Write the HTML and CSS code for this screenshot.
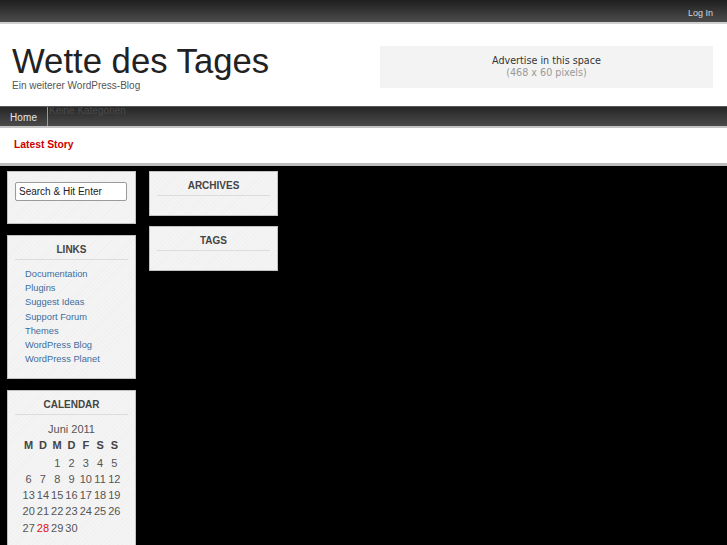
FILE: index.html
```html
<!DOCTYPE html>
<html lang="de">
<head>
<meta charset="utf-8">
<title>Wette des Tages</title>
<link rel="stylesheet" href="styles.css">
</head>
<body>
<div class="topbar"><a class="login" href="#">Log In</a></div>
<header class="header">
  <div class="brand">
    <h1 class="title">Wette des Tages</h1>
    <p class="tagline">Ein weiterer WordPress-Blog</p>
  </div>
  <div class="ad">
    <div class="ad-main">Advertise in this space</div>
    <div class="ad-sub">(468 x 60 pixels)</div>
  </div>
</header>
<nav class="nav">
  <a class="nav-home" href="#">Home</a>
  <span class="nav-cats">Keine Kategorien</span>
</nav>
<div class="latest"><span class="latest-label">Latest Story</span></div>
<main class="content">
  <div class="col">
    <section class="widget widget-search">
      <input class="search" type="text" value="Search &amp; Hit Enter">
    </section>
    <section class="widget widget-links">
      <h2 class="wtitle">Links</h2>
      <ul class="links">
        <li><a href="#">Documentation</a></li>
        <li><a href="#">Plugins</a></li>
        <li><a href="#">Suggest Ideas</a></li>
        <li><a href="#">Support Forum</a></li>
        <li><a href="#">Themes</a></li>
        <li><a href="#">WordPress Blog</a></li>
        <li><a href="#">WordPress Planet</a></li>
      </ul>
    </section>
    <section class="widget widget-cal">
      <h2 class="wtitle">Calendar</h2>
      <table class="cal">
        <caption>Juni 2011</caption>
        <thead>
          <tr><th>M</th><th>D</th><th>M</th><th>D</th><th>F</th><th>S</th><th>S</th></tr>
        </thead>
        <tbody>
          <tr><td></td><td></td><td>1</td><td>2</td><td>3</td><td>4</td><td>5</td></tr>
          <tr><td>6</td><td>7</td><td>8</td><td>9</td><td>10</td><td>11</td><td>12</td></tr>
          <tr><td>13</td><td>14</td><td>15</td><td>16</td><td>17</td><td>18</td><td>19</td></tr>
          <tr><td>20</td><td>21</td><td>22</td><td>23</td><td>24</td><td>25</td><td>26</td></tr>
          <tr><td>27</td><td class="today">28</td><td>29</td><td>30</td><td></td><td></td><td></td></tr>
        </tbody>
      </table>
    </section>
  </div>
  <div class="col">
    <section class="widget widget-empty">
      <h2 class="wtitle">Archives</h2>
    </section>
    <section class="widget widget-empty">
      <h2 class="wtitle">Tags</h2>
    </section>
  </div>
</main>
</body>
</html>
```

FILE: styles.css
```css
html, body {
  margin: 0;
  padding: 0;
}
body {
  background: #000;
  font-family: "Liberation Sans", Arial, sans-serif;
  color: #333;
}
a { text-decoration: none; }

.topbar {
  height: 22px;
  background: linear-gradient(#1f1f1f, #4c4c4c);
  border-bottom: 2px solid #cfcfcf;
  display: flex;
  justify-content: flex-end;
  align-items: center;
  padding-right: 14px;
}
.login {
  color: #d6d6d6;
  font-size: 9px;
  line-height: 12px;
  padding-top: 3px;
}

.header {
  background: #fff;
  height: 82px;
  display: flex;
  justify-content: space-between;
  align-items: flex-start;
  padding: 0 14px 0 12px;
}
.brand { padding-top: 20px; }
.title {
  margin: 0;
  font-weight: normal;
  font-size: 34.7px;
  line-height: 34px;
  color: #222;
}
.tagline {
  margin: 2px 0 0;
  font-size: 10px;
  line-height: 12px;
  color: #555;
}
.ad {
  margin-top: 22px;
  width: 333px;
  height: 42px;
  background: #f3f3f3;
  font-family: "DejaVu Sans", Verdana, sans-serif;
  font-size: 9.6px;
  line-height: 12px;
  text-align: center;
  display: flex;
  flex-direction: column;
  justify-content: center;
}
.ad-main { color: #333; }
.ad-sub { color: #999; }

.nav {
  height: 19px;
  border-top: 1px solid #5a5a5a;
  border-bottom: 2px solid #c4c4c4;
  background: linear-gradient(#262626, #4a4a4a);
  display: flex;
  align-items: stretch;
}
.nav-home {
  color: #e6e6e6;
  font-size: 10px;
  line-height: 19px;
  padding: 1px 10px 0 10px;
  border-right: 1px solid #9a9a9a;
  letter-spacing: 0.1px;
}
.nav-cats {
  color: #4a4a4a;
  font-size: 10px;
  line-height: 10px;
  padding: 0 0 0 1px;
  margin-top: -1px;
}

.latest {
  background: #fff;
  height: 35px;
  border-bottom: 3px solid #bdbdbd;
  padding-left: 14px;
  display: flex;
  align-items: center;
}
.latest-label {
  color: #cc0000;
  font-weight: bold;
  font-size: 10.3px;
  line-height: 12px;
  padding-bottom: 1px;
}

.content {
  display: flex;
  align-items: flex-start;
  gap: 13px;
  padding: 5px 7px 0;
}
.col {
  width: 129px;
  display: flex;
  flex-direction: column;
  gap: 11px;
}
.col + .col { gap: 10px; }

.widget {
  box-sizing: border-box;
  border: 1px solid #c2c2c2;
  background: repeating-linear-gradient(-45deg, #f4f4f4 0, #f4f4f4 2px, #f0f0f0 2px, #f0f0f0 3px);
  padding: 0 7px;
}
.wtitle {
  margin: 0;
  padding: 8px 0 3px;
  border-bottom: 1px solid #dcdcdc;
  font-size: 10px;
  line-height: 12px;
  font-weight: bold;
  text-transform: uppercase;
  text-align: center;
  color: #444;
}

.widget-search {
  padding-top: 10px;
  padding-bottom: 22px;
}
.search {
  display: block;
  box-sizing: border-box;
  width: 112px;
  height: 19px;
  margin: 0;
  padding: 0 3px;
  border: 1px solid #9a9a9a;
  border-radius: 2px;
  background: #fff;
  font-family: "Liberation Sans", Arial, sans-serif;
  font-size: 10px;
  color: #222;
}

.widget-empty { padding-bottom: 19px; }

.links {
  list-style: none;
  margin: 7px 0 0;
  padding: 0 0 12px 10px;
  font-size: 9.3px;
  line-height: 14.2px;
}
.links a { color: #3d6d9f; }

.widget-cal { padding-bottom: 12px; }
.cal {
  margin: 7px auto 0;
  border-collapse: collapse;
  width: 100px;
  table-layout: fixed;
  font-size: 11px;
  color: #555;
}
.cal caption {
  line-height: 14px;
  color: #555;
}
.cal th {
  font-weight: bold;
  color: #444;
  height: 18px;
  padding: 0;
  text-align: center;
  font-size: 11px;
}
.cal td {
  height: 16.3px;
  padding: 0;
  text-align: center;
}
.cal .today { color: #dd1111; }
```
